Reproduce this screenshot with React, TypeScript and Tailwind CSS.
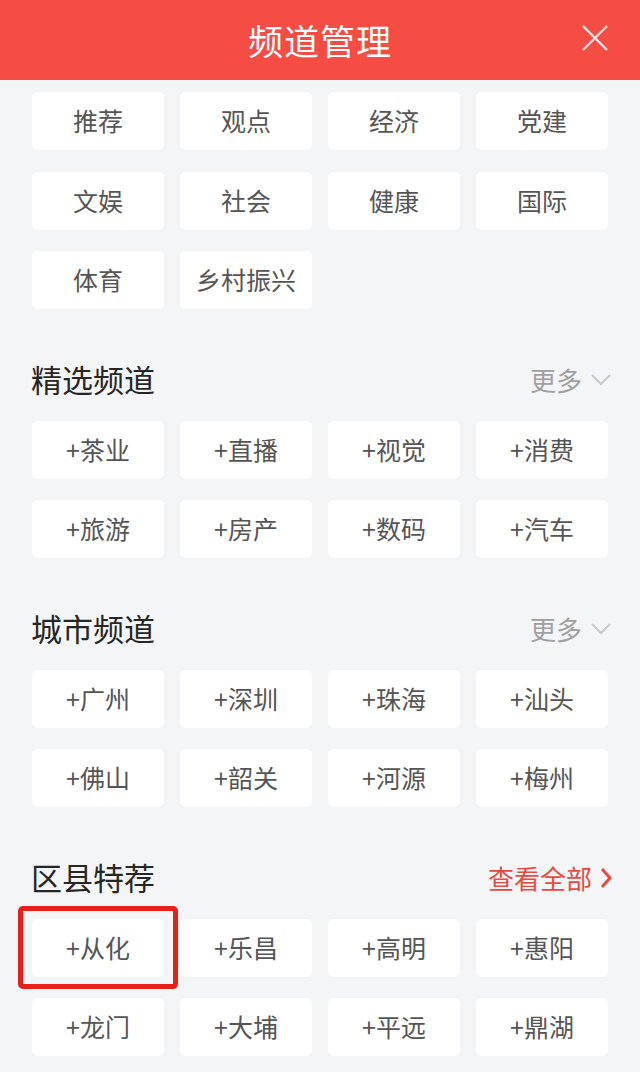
import React from "react";

const font = { fontFamily: '"Noto Sans CJK SC", "Noto Sans", sans-serif' };

function Btn({ label }: { label: string }) {
  return (
    <div className="h-[58px] bg-white rounded-[5px] flex items-center justify-center text-[25px] text-[#555555] shadow-[0_0_1px_rgba(0,0,0,0.06)]">
      {label}
    </div>
  );
}

function Grid({ items }: { items: string[] }) {
  return (
    <div className="grid grid-cols-4 gap-x-[16px] gap-y-[21.5px] px-[32px]">
      {items.map((t) => (
        <Btn key={t} label={t} />
      ))}
    </div>
  );
}

function Chevron({ color }: { color: string }) {
  return (
    <svg width="22" height="14" viewBox="0 0 22 14" fill="none">
      <path d="M2 2 L11 11 L20 2" stroke={color} strokeWidth="2" />
    </svg>
  );
}

function SectionTitle({ title, more, red }: { title: string; more: string; red?: boolean }) {
  return (
    <div className="h-[40px] mt-[50.5px] mb-[21px] pl-[31px] pr-[28px] flex items-center justify-between">
      <div className="text-[31px] text-[#262626]">{title}</div>
      {red ? (
        <div className="flex items-center gap-[8px] text-[26px] text-[#e8493f]">
          <span>{more}</span>
          <svg width="12" height="22" viewBox="0 0 12 22" fill="none">
            <path d="M2 2 L10 11 L2 20" stroke="#e8493f" strokeWidth="3" />
          </svg>
        </div>
      ) : (
        <div className="flex items-center gap-[8px] text-[26px] text-[#a0a0a0]">
          <span>{more}</span>
          <Chevron color="#c8c8c8" />
        </div>
      )}
    </div>
  );
}

export default function App() {
  return (
    <div className="w-[640px] h-[1072px] bg-[#f4f5f7] overflow-hidden relative" style={font}>
      <div className="h-[80px] bg-[#f54c44] flex items-center justify-center relative">
        <div className="text-[35px] text-white tracking-[1px]">频道管理</div>
        <svg className="absolute right-[31px] top-[24px]" width="28" height="28" viewBox="0 0 28 28" fill="none">
          <path d="M2 2 L26 26 M26 2 L2 26" stroke="#fbe3e1" strokeWidth="2.4" />
        </svg>
      </div>
      <div className="pt-[12px]">
        <Grid items={["推荐", "观点", "经济", "党建", "文娱", "社会", "健康", "国际", "体育", "乡村振兴"]} />
        <SectionTitle title="精选频道" more="更多" />
        <Grid items={["+茶业", "+直播", "+视觉", "+消费", "+旅游", "+房产", "+数码", "+汽车"]} />
        <SectionTitle title="城市频道" more="更多" />
        <Grid items={["+广州", "+深圳", "+珠海", "+汕头", "+佛山", "+韶关", "+河源", "+梅州"]} />
        <SectionTitle title="区县特荐" more="查看全部" red />
        <div className="relative">
          <Grid items={["+从化", "+乐昌", "+高明", "+惠阳", "+龙门", "+大埔", "+平远", "+鼎湖"]} />
          <div className="absolute left-[18px] top-[-13px] w-[160px] h-[83px] border-[5px] border-[#e8201a] rounded-[5px]" />
        </div>
      </div>
    </div>
  );
}
